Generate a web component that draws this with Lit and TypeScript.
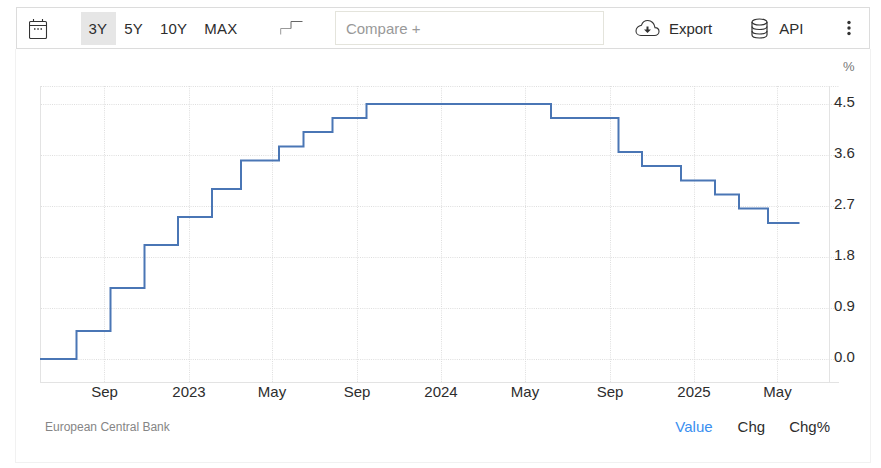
import { LitElement, html, css, svg } from "lit";
import { customElement } from "lit/decorators.js";

const STEPS = "M40 359H76.500V331H110.500V288H144.500V245H178V217H212V189H241V160.500H279V146.500H303.500V132H332.500V118H366.500V104H551V118H618.500V152H642V166H681V180.500H715V194.500H739V208.500H768V223H799.500";
const VX = [104.5, 189.5, 272.5, 357.5, 441.5, 525.5, 610.5, 694.5, 777.5];
const HY = [86.5, 104.5, 155.5, 206.5, 257.5, 308.5, 359.5];
const YL: [string, number][] = [["4.5", 107], ["3.6", 158], ["2.7", 209], ["1.8", 260], ["0.9", 311], ["0.0", 362]];
const XL: [string, number][] = [["Sep", 104.5], ["2023", 189], ["May", 272], ["Sep", 357], ["2024", 441], ["May", 525], ["Sep", 610], ["2025", 694], ["May", 777.5]];

@customElement("app-root")
export class AppRoot extends LitElement {
  static styles = css`
    :host { display: block; width: 881px; height: 468px; box-sizing: border-box; padding: 7px 10px 5px 15px; background: #fff; font-family: "Liberation Sans", Arial, sans-serif; color: #2d2d2d; overflow: hidden; }
    .toolbar { display: flex; align-items: center; height: 42px; box-sizing: border-box; margin: 0 1px; border: 1px solid #dcdcdc; font-size: 15px; }
    .cal { margin-left: 12px; width: 20px; height: 22px; display: block; }
    .ranges { display: flex; margin-left: 32px; height: 33px; align-items: stretch; }
    .range { display: flex; align-items: center; justify-content: center; padding: 0 8.500px; letter-spacing: 0.2px; }
    .range.sel { background: #e6e6e6; padding-left: 7.500px; }
    .steps { display: block; margin-left: 34px; width: 24px; height: 16px; }
    .compare { margin-left: 31px; width: 269px; height: 34px; box-sizing: border-box; border: 1px solid #e4e4dc; color: #999; padding-left: 10px; display: flex; align-items: center; }
    .act { display: flex; align-items: center; gap: 9px; }
    .export { margin-left: 31px; }
    .api { margin-left: 39px; gap: 11px; }
    .dots { display: block; margin-left: 43px; width: 6px; height: 16px; }
    .card { height: 414px; box-sizing: border-box; border: 1px solid #f1f1f1; border-top: none; display: flex; flex-direction: column; }
    .chart { display: block; width: 854px; height: 352px; }
    .chart text { font-family: "Liberation Sans", Arial, sans-serif; font-size: 15px; fill: #2d2d2d; }
    .chart .unit { font-size: 13px; fill: #777; }
    .footer { display: flex; align-items: center; padding: 17px 40px 0 29px; font-size: 12px; color: #858585; }
    .source { flex: 1; }
    .tabs { display: flex; gap: 24px; font-size: 15px; color: #2d2d2d; }
    .tabs .on { color: #3a8ff0; margin-right: 1px; }
  `;

  render() {
    return html`
      <div class="toolbar">
        <svg class="cal" viewBox="0 0 20 22" fill="none" stroke="#333" stroke-width="1.100">
          <rect x="0.500" y="4.500" width="17" height="17" rx="1.200"></rect>
          <path d="M0.500 8.500H17.500M4.500 2V4.500M13.500 2V4.500"></path>
          <path d="M5 12H6.500M8.300 12H9.800M11.500 12H13" stroke-width="1.500"></path>
        </svg>
        <div class="ranges">
          <div class="range sel">3Y</div><div class="range">5Y</div><div class="range">10Y</div><div class="range">MAX</div>
        </div>
        <svg class="steps" viewBox="0 0 24 16" fill="none" stroke-width="1">
          <path d="M0.700 14.500V8.500H11" stroke="#999"></path>
          <path d="M11 8.500V1.500H22.500" stroke="#666"></path>
        </svg>
        <div class="compare">Compare +</div>
        <div class="act export">
          <svg width="25" height="18" viewBox="0 0 25 18" fill="none" stroke="#333" stroke-width="1.100">
            <path d="M6 16.500H19.500C22 16.500 24 14.800 24 12.500C24 10.300 22.200 8.700 20 8.600C19.500 4.500 16.500 1.500 12.800 1.500C9.800 1.500 7.400 3.400 6.500 6.200C3.500 6.700 1 9.200 1 12C1 14.500 3.200 16.500 6 16.500Z"></path>
            <path d="M12.500 7.500V12" stroke-width="2"></path>
            <path d="M9 10.500H16L12.500 14Z" fill="#333" stroke="none"></path>
          </svg>
          <span>Export</span>
        </div>
        <div class="act api">
          <svg width="17" height="21" viewBox="0 0 17 21" fill="none" stroke="#333" stroke-width="1.200">
            <ellipse cx="8.500" cy="4" rx="7.500" ry="3"></ellipse>
            <path d="M1 4V17C1 18.700 4.400 20 8.500 20S16 18.700 16 17V4"></path>
            <path d="M1 8.500C1 10.200 4.400 11.500 8.500 11.500S16 10.200 16 8.500M1 13C1 14.700 4.400 16 8.500 16S16 14.700 16 13"></path>
          </svg>
          <span>API</span>
        </div>
        <svg class="dots" viewBox="0 0 6 16" fill="#333">
          <circle cx="3" cy="2.500" r="1.700"></circle><circle cx="3" cy="8" r="1.700"></circle><circle cx="3" cy="13.500" r="1.700"></circle>
        </svg>
      </div>
      <div class="card">
        <svg class="chart" viewBox="16 49 854 352">
          ${VX.map((x) => svg`<line x1=${x} x2=${x} y1="86" y2="382" stroke="#dedede" stroke-dasharray="1 1.200"></line>`)}
          ${HY.map((y) => svg`<line x1="41" x2="839" y1=${y} y2=${y} stroke="#dedede" stroke-dasharray="1 1.200"></line>`)}
          <line x1="40.500" x2="40.500" y1="86" y2="382" stroke="#e3e3e3"></line>
          <line x1="829.500" x2="829.500" y1="86" y2="382" stroke="#e3e3e3"></line>
          <line x1="40" x2="839" y1="382.500" y2="382.500" stroke="#e3e3e3"></line>
          <path d=${STEPS} fill="none" stroke="#4a76b5" stroke-width="2"></path>
          <text class="unit" x="843" y="71">%</text>
          ${YL.map(([t, y]) => svg`<text x="834" y=${y}>${t}</text>`)}
          ${XL.map(([t, x]) => svg`<text x=${x} y="397" text-anchor="middle">${t}</text>`)}
        </svg>
        <div class="footer">
          <span class="source">European Central Bank</span>
          <div class="tabs"><span class="on">Value</span><span>Chg</span><span>Chg%</span></div>
        </div>
      </div>
    `;
  }
}
